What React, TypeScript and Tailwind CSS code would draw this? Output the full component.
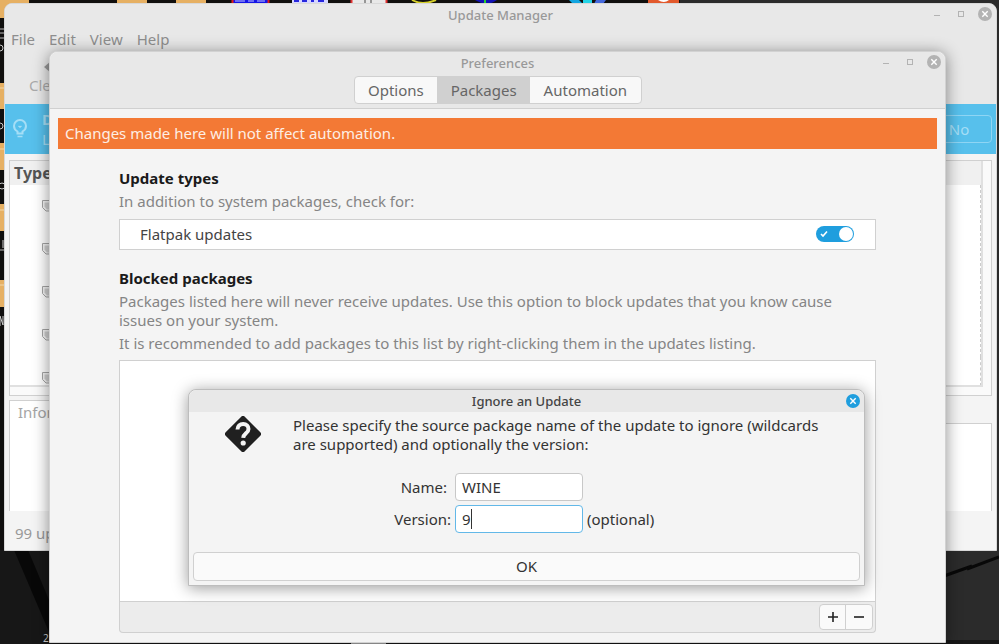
import { useState, type ReactNode } from 'react'
import clsx from 'clsx'

const TABS = ['Options', 'Packages', 'Automation']
const ROWS = [1, 2, 3, 4, 5]

function Desktop() {
  return (
    <div aria-hidden="true" className="absolute inset-0 bg-[#171717]">
      <svg className="absolute inset-0 size-full">
        <rect width="999" height="550" fill="#100f0e" />
        <rect x="680" width="319" height="640" fill="#2b2b2b" />
        <g fill="#e6b063">
          <path d="M0 0h29v18H0zM117 0h30v6h-30zM176 0h30v6h-30z" />
          <path d="M0 83h8v26H0zM0 143h8v27H0zM0 204h8v27H0zM0 280h8v27H0z" />
        </g>
        <path d="M0 88h5M0 149h5M0 210h5M0 285h5" stroke="#f3d7a8" />
        <path d="M0 29h4M0 33h4M0 38h4M0 250h4" stroke="#b9b9b9" />
        <g fill="none" stroke="#c9c9c9">
          <circle cx="0" cy="48" r="3" />
          <circle cx="0" cy="126" r="3" />
          <circle cx="2" cy="186" r="3" />
          <path d="M0 316v10M0 316l3 9V316M3 240v8" />
        </g>
        <rect x="232" width="37" height="3" fill="#1414e6" />
        <path d="M235 1h10M248 1h6M257 1h8" stroke="#c8c8ff" />
        <path d="M232.500 0v3M268.500 0v3" stroke="#e01818" strokeWidth="2" />
        <rect x="292" width="36" height="3" fill="#d5d5ff" />
        <path d="M294 1h5M302 1h5M311 1h3M318 1h6" stroke="#2626dd" strokeWidth="2" />
        <rect x="351" width="36" height="3" fill="#e8e8e8" />
        <path d="M351.500 0v3M386.500 0v3" stroke="#e03030" strokeWidth="2" />
        <path d="M365 0v3M371 0v3" stroke="#444" />
        <path d="M412 0q10 6 24 0" fill="none" stroke="#d6d02a" strokeWidth="2" />
        <path d="M475 0h22q-10 7-22 0" fill="#1010b4" />
        <path d="M485 0v3" stroke="#2ad22a" strokeWidth="2" />
        <path d="M569 0h10l4 4h-10z" fill="#12a5e0" />
        <path d="M583 0h9v4h-9z" fill="#22d3e6" />
        <path d="M596 0h10l-3 4h-9z" fill="#4468dc" />
        <path d="M648 0h31v4h-31z" fill="#e2592c" />
        <path d="M658 0q6 4 11 0" fill="#fff" />
        <path d="M14 550h14l21 50v32z" fill="#080808" />
        <path d="M944 576l28-10M967 569l32-12" stroke="#080808" strokeWidth="3" />
        <path d="M351 643h35" stroke="#b5b5b5" strokeWidth="2" />
      </svg>
      <span className="absolute bottom-0 left-[43px] text-[10px] leading-3 text-[#ccc]">2</span>
    </div>
  )
}

function CloseGlyph({ className }: { className: string }) {
  return (
    <svg viewBox="0 0 14 14" className={clsx('size-3.5', className)}>
      <circle cx="7" cy="7" r="7" fill="currentColor" />
      <path d="M4.300 4.300l5.400 5.400M9.700 4.300l-5.400 5.400" stroke="#fff" strokeWidth="1.400" />
    </svg>
  )
}

function WindowButtons() {
  return (
    <div className="absolute top-[3px] right-1 flex items-center gap-2.5 text-[#b3b3b3]">
      <button aria-label="Minimize" className="size-3.5">
        <svg viewBox="0 0 14 14"><path d="M4 8.500h6" stroke="currentColor" /></svg>
      </button>
      <button aria-label="Maximize" className="size-3.5">
        <svg viewBox="0 0 14 14"><rect x="4.500" y="4.500" width="5" height="5" fill="none" stroke="currentColor" /></svg>
      </button>
      <button aria-label="Close" className="size-3.5"><CloseGlyph className="text-[#b3b3b3]" /></button>
    </div>
  )
}

function Shield() {
  return (
    <svg viewBox="0 0 12 12" className="ml-8 size-3">
      <path d="M.5.500h11v6.500l-3.500 4h-4L.5 7.500z" fill="#f4f4f4" stroke="#a5a5a5" />
      <path d="M2.500 2.500h7v4l-2.500 3h-2l-2.500-3z" fill="#cfcfcf" />
    </svg>
  )
}

function UpdateManager() {
  return (
    <section className="absolute top-[3px] right-0.5 left-1 flex h-[548px] flex-col overflow-hidden rounded-t-lg border border-[#d8d8d8] bg-[#f4f4f4] text-[#999]">
      <header className="relative h-[100px] shrink-0 bg-[#e8e8e8]">
        <h1 className="text-center text-[13px] leading-[22px] font-medium">Update Manager</h1>
        <WindowButtons />
        <nav className="mt-[3px] flex gap-3.5 px-1.5 text-[15px] leading-5 text-[#8e8e8e]">
          <button>File</button>
          <button>Edit</button>
          <button>View</button>
          <button>Help</button>
        </nav>
        <button className="ml-6 mt-2.5 flex flex-col items-center text-[15px] leading-5 text-[#aaa]">
          <svg viewBox="0 0 12 16" className="h-4 w-3"><path d="M10 2L3 8l7 6z" fill="#999" /></svg>
          Clear
        </button>
      </header>
      <div className="flex h-[50px] shrink-0 items-center bg-[#57c0ec] pr-1 pl-2 text-[15px] leading-5 text-[#a5def6]">
        <svg viewBox="0 0 14 20" className="mr-[15px] h-5 w-3.5" fill="none" stroke="currentColor" strokeWidth="2">
          <path d="M4.500 12.500Q1 10.500 1 7a6 6 0 0 1 12 0q0 3.500-3.500 5.500v2h-5z" />
          <path d="M4.500 17.500h5M5.500 7l1.500 1 1.500-1" strokeWidth="1.500" />
        </svg>
        <div className="flex-1">
          <p className="font-bold">Do</p>
          <p>Lo</p>
        </div>
        <button className="h-7 w-[66px] rounded-sm border border-[#8fd5f4] text-[#a5def6]">No</button>
      </div>
      <div className="mx-1 mt-1.5 flex h-[236px] shrink-0 border border-[#d0d0d0] bg-[#fafafa] pr-2 pb-2">
        <div className="flex-1 overflow-hidden border-r-2 border-b-2 border-[#e0e0e0] bg-white">
          <table className="w-full">
            <thead className="bg-[#f0f0f0]">
              <tr><th className="h-6 pl-1 text-left text-base leading-5 font-bold text-[#555]">Type</th></tr>
            </thead>
            <tbody className="border-r border-b border-dashed border-[#ccc]">
              {ROWS.map(r => (
                <tr key={r}>
                  <td className={clsx('pt-[15px] align-top', r === ROWS.length ? 'h-7' : 'h-[43px]')}><Shield /></td>
                </tr>
              ))}
            </tbody>
          </table>
        </div>
      </div>
      <div className="mx-1 mt-1 flex h-[111px] shrink-0 flex-col">
        <div className="relative -mb-px h-6 w-24 border-t border-l border-[#d0d0d0] bg-white pl-2 text-[15px] leading-[22px] text-[#a5a5a5]">Information</div>
        <div className="flex-1 border-x border-t border-[#d0d0d0] bg-white" />
      </div>
      <footer className="px-2.5 py-3 text-[15px] leading-5">99 updates</footer>
    </section>
  )
}

function Switch() {
  const [on, setOn] = useState(true)
  return (
    <span className="relative flex">
      <input
        id="flatpak"
        type="checkbox"
        checked={on}
        onChange={() => setOn(!on)}
        className="h-4 w-[38px] appearance-none rounded-full bg-[#bbb] checked:bg-[#1f9ede]"
      />
      <span className={clsx('pointer-events-none absolute top-px size-3.5 rounded-full bg-white', on ? 'right-px' : 'left-px')} />
      {on && (
        <svg viewBox="0 0 8 8" className="pointer-events-none absolute top-1 left-1 size-2">
          <path d="M1 4l2 2 4-4.500" fill="none" stroke="#fff" strokeWidth="1.600" />
        </svg>
      )}
    </span>
  )
}

function Muted({ children }: { children: ReactNode }) {
  return <p className="text-[15px] leading-[19px] text-[#858585]">{children}</p>
}

function Preferences() {
  const [tab, setTab] = useState('Packages')
  return (
    <section className="absolute top-[51px] right-[53px] left-[49px] flex h-[592px] flex-col rounded-t-lg border border-[#d2d2d2] bg-[#f4f4f4] shadow-[0_2px_16px_rgba(0,0,0,0.45)]">
      <header className="relative h-[57px] shrink-0 rounded-t-lg border-b border-[#d0d0d0] bg-[#e8e8e8]">
        <h2 className="text-center text-[13px] leading-[22px] font-medium text-[#999]">Preferences</h2>
        <WindowButtons />
        <div role="tablist" className="mx-auto mt-0.5 flex h-7 w-72 overflow-hidden rounded-sm border border-[#d0d0d0] bg-[#f8f8f8] text-[15px] text-[#666]">
          {TABS.map(t => (
            <button
              key={t}
              role="tab"
              aria-selected={t === tab}
              onClick={() => setTab(t)}
              className={clsx('flex-auto', t === tab && 'bg-[#d0d0d0]')}
            >
              {t}
            </button>
          ))}
        </div>
      </header>
      <p className="mx-2 mt-[9px] h-[31px] shrink-0 bg-[#f37935] px-[7px] text-[15px] leading-[31px] text-[#fdeee4]">
        Changes made here will not affect automation.
      </p>
      <div className="mx-[69px] mt-[19px] flex flex-col">
        <h3 className="text-[15px] leading-5 font-bold text-[#1a1a1a]">Update types</h3>
        <div className="mt-1"><Muted>In addition to system packages, check for:</Muted></div>
        <div className="mt-2 flex h-[31px] items-center justify-between border border-[#d0d0d0] bg-white pr-[21px] pb-px pl-5">
          <label htmlFor="flatpak" className="text-[15px] leading-5 text-[#444]">Flatpak updates</label>
          <Switch />
        </div>
        <h3 className="mt-[18px] text-[15px] leading-5 font-bold text-[#1a1a1a]">Blocked packages</h3>
        <div className="mt-1 flex flex-col gap-1">
          <Muted>
            Packages listed here will never receive updates. Use this option to block updates that you know cause
            issues on your system.
          </Muted>
          <Muted>It is recommended to add packages to this list by right-clicking them in the updates listing.</Muted>
        </div>
        <div className="mt-[7px] h-[242px] border border-[#d0d0d0] bg-white" />
        <div className="flex h-[31px] items-center justify-end rounded-b-sm border border-t-0 border-[#d0d0d0] bg-[#ececec] px-0.5">
          <div className="flex h-[26px] divide-x divide-[#d0d0d0] rounded-sm border border-[#d0d0d0] bg-[#fafafa]">
            <button aria-label="Add" className="grid w-[26px] place-items-center">
              <svg viewBox="0 0 12 12" className="size-3"><path d="M6 1v10M1 6h10" stroke="#222" strokeWidth="1.600" /></svg>
            </button>
            <button aria-label="Remove" className="grid w-[26px] place-items-center">
              <svg viewBox="0 0 12 12" className="size-3"><path d="M1 6h10" stroke="#222" strokeWidth="1.600" /></svg>
            </button>
          </div>
        </div>
      </div>
    </section>
  )
}

function IgnoreDialog() {
  const [name, setName] = useState('WINE')
  const [version, setVersion] = useState('9')
  return (
    <section
      role="dialog"
      aria-labelledby="ignore-title"
      className="absolute top-[389px] right-[134px] left-[188px] flex h-[197px] flex-col rounded-t-lg border border-[#bdbdbd] bg-[#f4f4f4] text-[15px] text-[#333] shadow-[0_2px_16px_rgba(0,0,0,0.4)]"
    >
      <header className="relative h-[22px] shrink-0 rounded-t-lg bg-[#e8e8e8]">
        <h2 id="ignore-title" className="text-center text-[13px] leading-[22px] font-medium text-[#444]">Ignore an Update</h2>
        <button aria-label="Close" className="absolute top-1 right-1 size-3.5"><CloseGlyph className="text-[#1f9ede]" /></button>
      </header>
      <div className="flex gap-8 pt-1 pr-5 pl-9">
        <svg viewBox="1 1 36 36" className="size-9 shrink-0">
          <rect x="5.500" y="5.500" width="27" height="27" rx="2.500" fill="#202020" transform="rotate(45 19 19)" />
          <path d="M13.500 14.500c0-3.500 2.400-5.500 5.700-5.500 3.200 0 5.300 2 5.300 4.900 0 4.500-5 4.300-5.300 9" fill="none" stroke="#f4f4f4" strokeWidth="4" />
          <circle cx="19.200" cy="28" r="2.600" fill="#f4f4f4" />
        </svg>
        <p className="leading-[19px]">
          Please specify the source package name of the update to ignore (wildcards are supported) and optionally the version:
        </p>
      </div>
      <div className="mt-[19px] ml-[204px] grid grid-cols-[58px_128px_auto] items-center justify-start gap-x-1 gap-y-1">
        <label htmlFor="name" className="pr-1 text-right">Name:</label>
        <input id="name" value={name} onChange={e => setName(e.target.value)} className="h-7 w-full rounded-sm border border-[#c8c8c8] bg-white px-1.5 outline-none" />
        <span />
        <label htmlFor="version" className="text-right">Version:</label>
        <div className="relative">
          <input id="version" value={version} onChange={e => setVersion(e.target.value)} className="block h-7 w-full rounded-sm border border-[#62b8e8] bg-white px-1.5 outline-none" />
          <span className="pointer-events-none absolute top-1 left-4 h-5 w-px bg-[#333]" />
        </div>
        <span>(optional)</span>
      </div>
      <button className="mx-1 mt-auto mb-1 h-[29px] rounded-sm border border-[#d0d0d0] bg-[#fafafa]">OK</button>
    </section>
  )
}

export default function App() {
  return (
    <main className="relative h-screen overflow-hidden font-['Noto_Sans',sans-serif]">
      <Desktop />
      <UpdateManager />
      <Preferences />
      <IgnoreDialog />
    </main>
  )
}
